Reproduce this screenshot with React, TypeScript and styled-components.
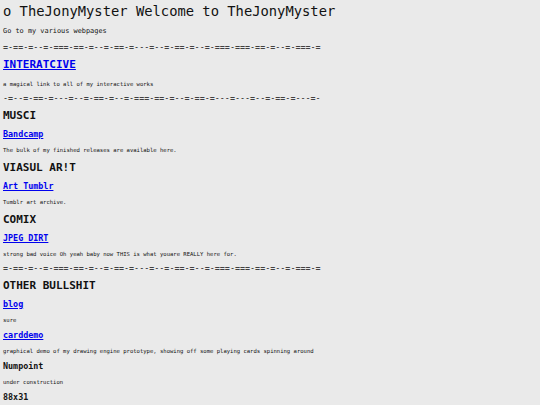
import styled, { createGlobalStyle } from "styled-components";

const GlobalStyle = createGlobalStyle`
  html, body {
    margin: 0;
    padding: 0;
    background: #eaeaea;
  }
  body {
    font-family: "DejaVu Sans Mono", "Liberation Mono", monospace;
    color: #111;
  }
`;

const Page = styled.div`
  display: flex;
  flex-direction: column;
  padding: 1px 3px 0;
  height: 405px;
  box-sizing: border-box;
  overflow: hidden;
`;

const Title = styled.h1`
  margin: 0;
  font-size: 13.8px;
  font-weight: normal;
  line-height: 21px;
  white-space: nowrap;
`;

const Intro = styled.p`
  margin: 0;
  font-size: 6.9px;
  line-height: 18px;
`;

const Divider = styled.div`
  font-size: 8.4px;
  line-height: 14px;
  white-space: nowrap;
`;

const Section = styled.h2`
  margin: 0;
  font-size: 11px;
  font-weight: bold;
  line-height: 21px;
`;

const Item = styled.h3<{ $big?: boolean }>`
  margin: 0;
  font-size: ${(p) => (p.$big ? "11px" : "8.4px")};
  font-weight: bold;
  line-height: ${(p) => (p.$big ? "22px" : "16px")};
`;

const Link = styled.a`
  color: #0000ee;
  text-decoration: underline;
`;

const Note = styled.p`
  margin: 0;
  padding-top: 2px;
  font-size: 5.55px;
  line-height: 13px;
  white-space: nowrap;
`;

const dashA = "=-==-=--=-===-==-=--=-==-=---=--=-==-=--=-===-===-==-=--=-===-=";
const dashB = "-=--=-==-=---=--=-==-=--=-===-==-=--=-==-=---=---=--=-==-=---=-";

type Entry = { name: string; href?: string; note: string };

const music: Entry[] = [
  { name: "Bandcamp", href: "#", note: "The bulk of my finished releases are available here." },
];
const art: Entry[] = [{ name: "Art Tumblr", href: "#", note: "Tumblr art archive." }];
const comix: Entry[] = [
  {
    name: "JPEG DIRT",
    href: "#",
    note: "strong bad voice Oh yeah baby now THIS is what youare REALLY here for.",
  },
];
const other: Entry[] = [
  { name: "blog", href: "#", note: "sure" },
  {
    name: "carddemo",
    href: "#",
    note: "graphical demo of my drawing engine prototype, showing off some playing cards spinning around",
  },
  { name: "Numpoint", note: "under construction" },
  { name: "88x31", note: "" },
];

function Entries({ list }: { list: Entry[] }) {
  return (
    <>
      {list.map((e) => (
        <div key={e.name}>
          <Item>{e.href ? <Link href={e.href}>{e.name}</Link> : e.name}</Item>
          {e.note && <Note>{e.note}</Note>}
        </div>
      ))}
    </>
  );
}

export default function App() {
  return (
    <>
      <GlobalStyle />
      <Page>
        <Title>o TheJonyMyster Welcome to TheJonyMyster</Title>
        <Intro>Go to my various webpages</Intro>
        <Divider>{dashA}</Divider>
        <Item $big>
          <Link href="#">INTERATCIVE</Link>
        </Item>
        <Note>a magical link to all of my interactive works</Note>
        <Divider>{dashB}</Divider>
        <Section>MUSCI</Section>
        <Entries list={music} />
        <Section>VIASUL AR!T</Section>
        <Entries list={art} />
        <Section>COMIX</Section>
        <Entries list={comix} />
        <Divider>{dashA}</Divider>
        <Section>OTHER BULLSHIT</Section>
        <Entries list={other} />
      </Page>
    </>
  );
}
